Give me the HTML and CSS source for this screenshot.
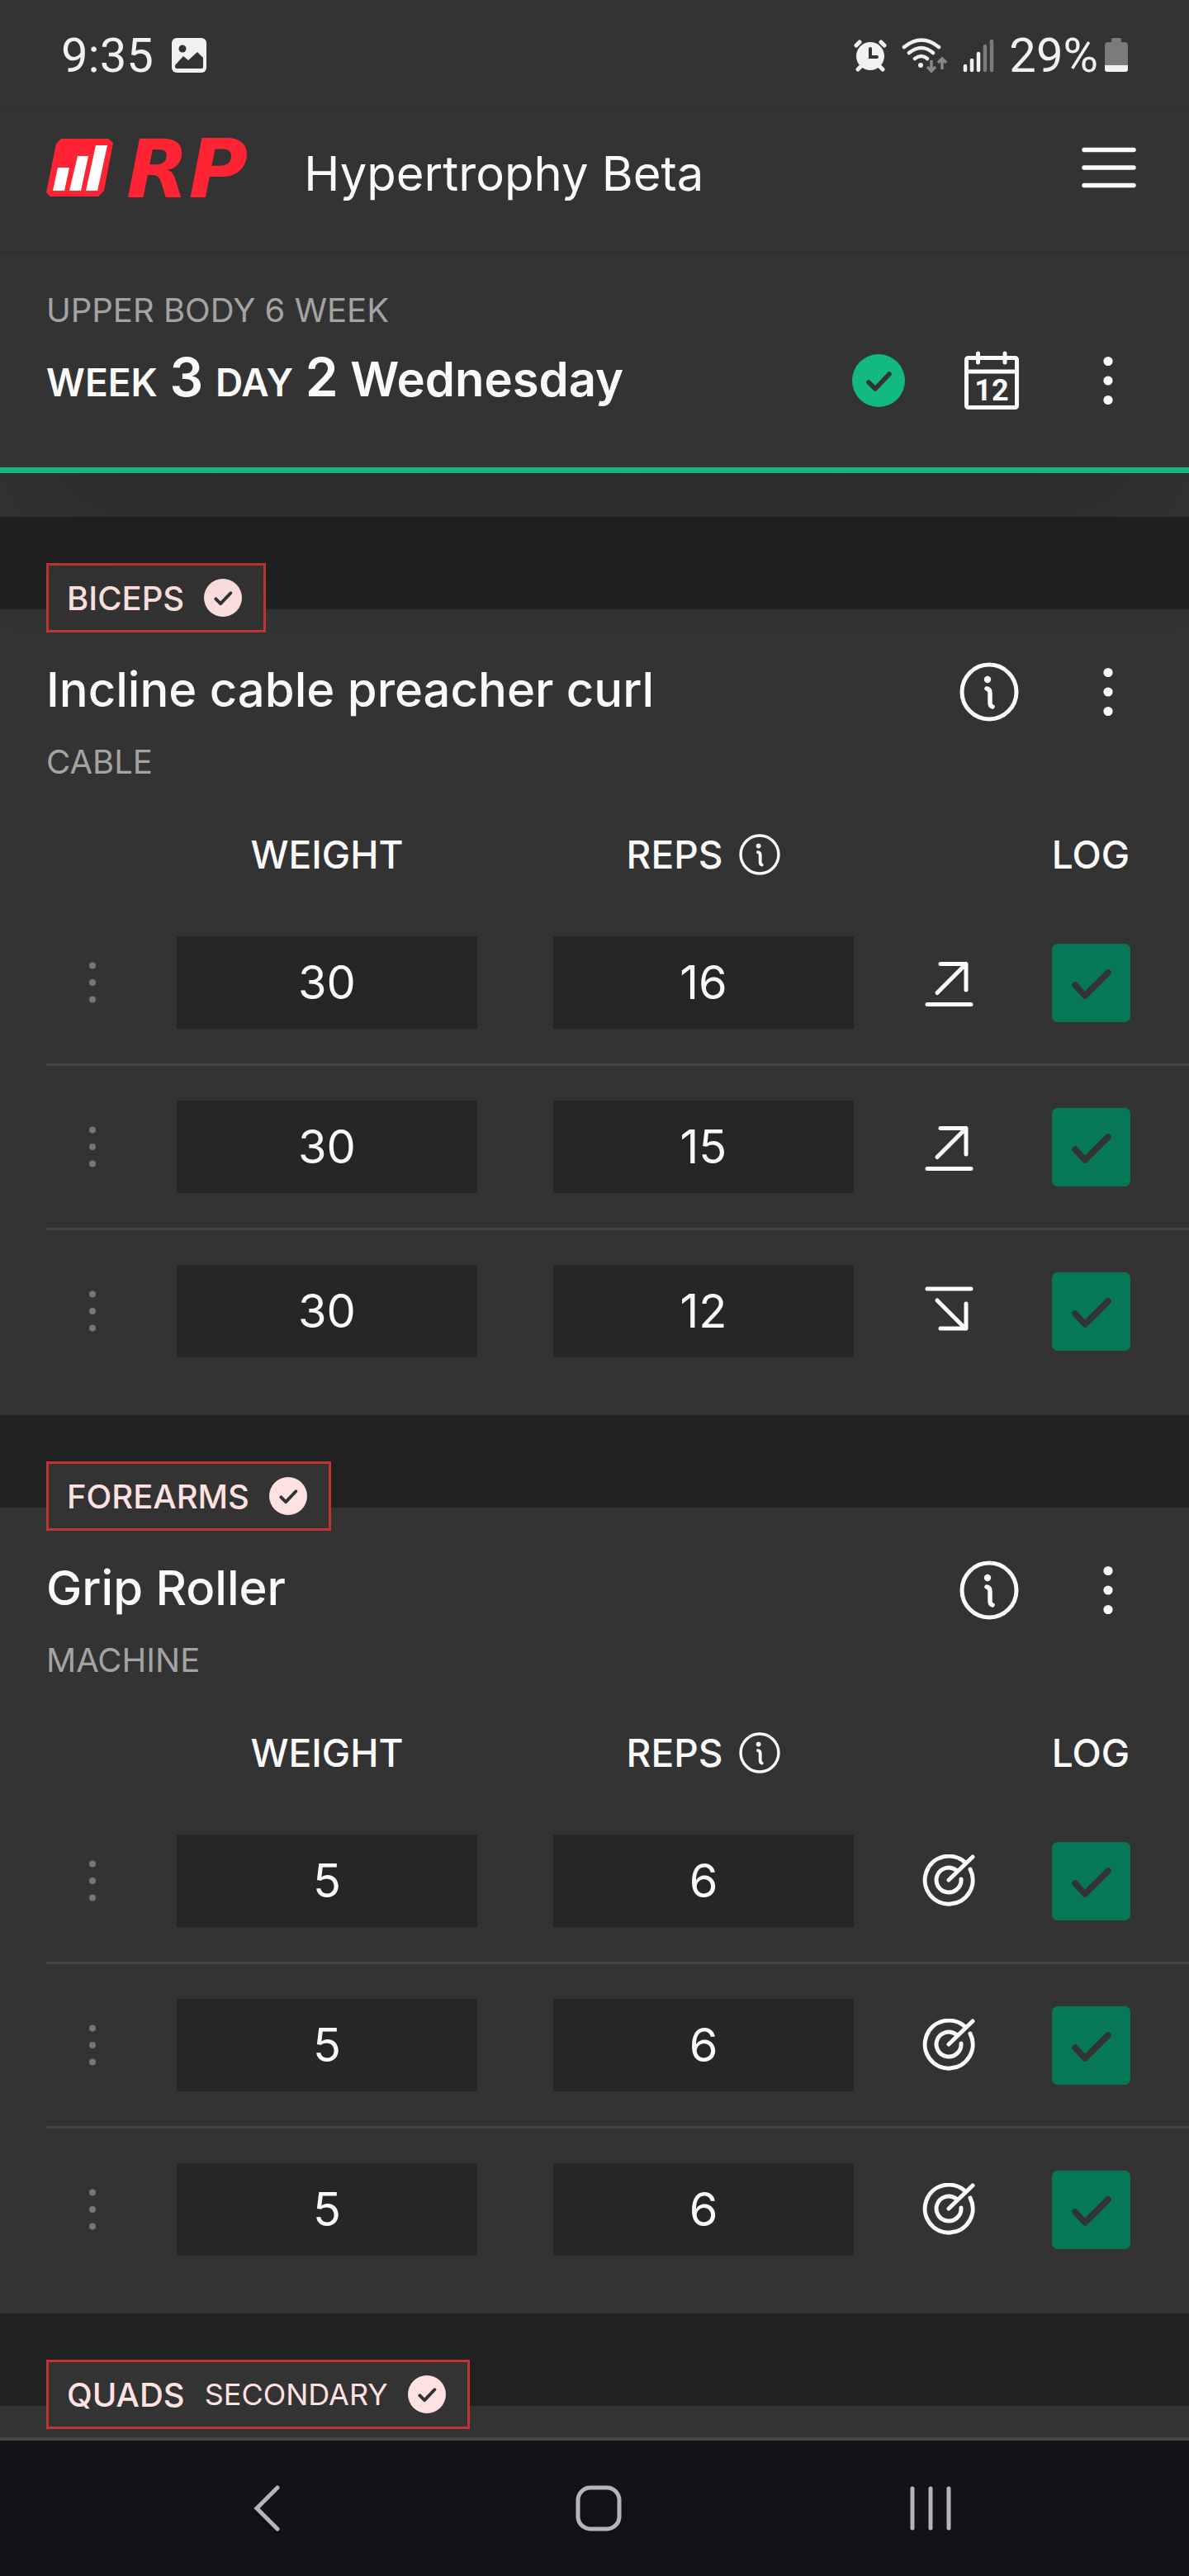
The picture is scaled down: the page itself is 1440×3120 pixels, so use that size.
FILE: index.html
```html
<!DOCTYPE html>
<html lang="en">
<head>
<meta charset="UTF-8">
<meta name="viewport" content="width=device-width, initial-scale=1">
<title>Hypertrophy Beta</title>
<link rel="stylesheet" href="styles.css">
</head>

<body>
  <!-- ============  Shared icons  ============ -->
  <svg class="sprite" aria-hidden="true">
    <symbol id="i-info" viewBox="0 0 72 72">
      <circle cx="36" cy="36" r="33" fill="none" stroke="currentColor" stroke-width="5"/>
      <circle cx="34" cy="21" r="4.2" fill="currentColor"/>
      <path d="M33 32q4 1 4 5v12q0 4 3 5" fill="none" stroke="currentColor" stroke-width="5.5" stroke-linecap="round"/>
    </symbol>
    <symbol id="i-dots" viewBox="0 0 12 72">
      <circle cx="6" cy="12.5" r="5.6" fill="currentColor"/>
      <circle cx="6" cy="36" r="5.6" fill="currentColor"/>
      <circle cx="6" cy="59.5" r="5.6" fill="currentColor"/>
    </symbol>
    <symbol id="i-grip" viewBox="0 0 10 52">
      <circle cx="5" cy="5.5" r="4" fill="currentColor"/>
      <circle cx="5" cy="26" r="4" fill="currentColor"/>
      <circle cx="5" cy="46.5" r="4" fill="currentColor"/>
    </symbol>
    <symbol id="i-done" viewBox="0 0 64 64">
      <circle cx="32" cy="32" r="32" fill="currentColor"/>
      <path d="M20 34l8 8 17-18" fill="none" stroke="#333" stroke-width="5.5" stroke-linecap="round" stroke-linejoin="round"/>
    </symbol>
    <symbol id="i-check" viewBox="0 0 95 95">
      <path d="M28 50l12 13 28-28" fill="none" stroke="currentColor" stroke-width="7.5" stroke-linecap="round" stroke-linejoin="round"/>
    </symbol>
    <symbol id="i-up" viewBox="0 0 64 64">
      <path d="M6 58.5h53M18 44.5L53 9.5M22 9.5h31V41"/>
    </symbol>
    <symbol id="i-down" viewBox="0 0 64 64">
      <path d="M6 5h53M18 19l34 34M22 53h31V23"/>
    </symbol>
    <symbol id="i-target" viewBox="0 0 64 64">
      <path d="M58 18A29 29 0 1 1 52 10M47 30A15 15 0 1 1 41 19M32 31L61 3"/>
    </symbol>
  </svg>

  <header class="top">
    <!-- ============  Status bar  ============ -->
    <div class="status">
      <span>9:35</span>
      <svg class="status-photo" width="42" height="42" viewBox="0 0 42 42" aria-hidden="true">
        <rect width="42" height="42" rx="6" fill="#f1f1f1"/>
        <circle cx="13" cy="13" r="4.5" fill="#333"/>
        <path d="M4 33l10-11 6 5 11-10 7 7v11q0 2-2 2H6q-2 0-2-2z" fill="#333"/>
      </svg>
      <div class="status-right">
        <svg width="40" height="40" viewBox="0 0 40 40" aria-hidden="true">
          <g fill="none" stroke="#f1f1f1" stroke-width="5" stroke-linecap="round">
            <path d="M3 8l4-4M37 8l-4-4M10 32l-5 5M30 32l5 5"/>
          </g>
          <circle cx="20" cy="21" r="17" fill="#f1f1f1"/>
          <path d="M20 12v10h8" fill="none" stroke="#333" stroke-width="4" stroke-linecap="round"/>
        </svg>
        <svg width="56" height="42" viewBox="0 0 56 42" aria-hidden="true">
          <g fill="none" stroke="#f1f1f1" stroke-width="4.5" stroke-linecap="round">
            <path d="M3 11Q24-6 45 11M9 18q15-12 29 0M16 25q8-6 15 0"/>
          </g>
          <circle cx="23" cy="33" r="3" fill="#f1f1f1"/>
          <path d="M36 27v13M31 35l5 5 5-5M49 38V25M44 30l5-5 5 5" fill="none" stroke="#888" stroke-width="3.5"/>
        </svg>
        <svg width="38" height="42" viewBox="0 0 38 42" aria-hidden="true">
          <g stroke="#f1f1f1" stroke-width="4.5" stroke-linecap="round">
            <path d="M3 34v5M11 27v12M19 19v20"/>
            <path d="M27 10v29M35 4v35" stroke="#7b7b7b"/>
          </g>
        </svg>
        <span class="battery">29%
          <svg width="28" height="42" viewBox="0 0 28 42" aria-hidden="true">
            <path d="M8 5V2q0-2 2-2h8q2 0 2 2v3h4q4 0 4 4v24H0V9q0-4 4-4z" fill="#7b7b7b"/>
            <path d="M0 33h28v5q0 3-3 3H3q-3 0-3-3z" fill="#f1f1f1"/>
          </svg>
        </span>
      </div>
    </div>

    <!-- ============  App bar  ============ -->
    <div class="appbar">
      <a href="#" class="logo" aria-label="RP">
        <svg width="81" height="70" viewBox="0 0 81 70" aria-hidden="true">
          <path d="M18 0h57l6 5-11 58-7 7H5l-5-5L12 6z" fill="#ff2434"/>
          <path d="M14 35h14l-6 28H8zM38 21h13l-9 42H28zM60 8h14L62 63H48z" fill="#fff"/>
        </svg>
        <span class="logo-name">RP</span>
      </a>
      <span class="app-name">Hypertrophy Beta</span>
      <button class="icon-btn menu" aria-label="Menu">
        <svg width="66" height="50" viewBox="0 0 66 50">
          <path d="M3 3.5h60M3 25h60M3 46.5h60" stroke="currentColor" stroke-width="5.5" stroke-linecap="round"/>
        </svg>
      </button>
    </div>

    <!-- ============  Workout day  ============ -->
    <div class="day">
      <p class="muted">UPPER BODY 6 WEEK</p>
      <div class="day-row">
        <h1><small>WEEK</small> <b>3</b> <small>DAY</small> <b>2</b> Wednesday</h1>
        <svg class="day-done" width="64" height="64"><use href="#i-done"/></svg>
        <button class="icon-btn" aria-label="Calendar">
          <svg width="66" height="72" viewBox="0 0 66 72">
            <g fill="none" stroke="currentColor" stroke-width="5" stroke-linecap="round">
              <rect x="2.5" y="8.5" width="61" height="60" rx="2"/>
              <path d="M3 25h60M16.5 3v11M49 3v11"/>
            </g>
            <text class="cal-num" x="33" y="60" text-anchor="middle">12</text>
          </svg>
        </button>
        <button class="icon-btn more" aria-label="Workout options">
          <svg width="12" height="72"><use href="#i-dots"/></svg>
        </button>
      </div>
    </div>
  </header>

  <main>
    <div class="card-end"></div>

    <!-- ============  Biceps  ============ -->
    <section class="card">
      <div class="tag">BICEPS <svg width="46" height="46"><use href="#i-done"/></svg></div>
      <div class="card-head">
        <h2>Incline cable preacher curl</h2>
        <button class="icon-btn" aria-label="Exercise info"><svg width="72" height="72"><use href="#i-info"/></svg></button>
        <button class="icon-btn more" aria-label="Exercise options"><svg width="12" height="72"><use href="#i-dots"/></svg></button>
      </div>
      <p class="muted kind">CABLE</p>

      <table class="sets">
        <thead>
          <tr>
            <th class="c-grip"></th>
            <th>WEIGHT</th>
            <th><span class="reps">REPS <svg width="50" height="50"><use href="#i-info"/></svg></span></th>
            <th class="c-goal"></th>
            <th class="c-log">LOG</th>
          </tr>
        </thead>
        <tbody>
          <tr>
            <td><button class="icon-btn grip" aria-label="Set options"><svg width="10" height="52"><use href="#i-grip"/></svg></button></td>
            <td><input class="num" type="text" value="30" aria-label="Weight"></td>
            <td><input class="num" type="text" value="16" aria-label="Reps"></td>
            <td><svg class="goal" width="64" height="64"><use href="#i-up"/></svg></td>
            <td class="c-log"><label class="log"><input type="checkbox" checked aria-label="Log set"><svg><use href="#i-check"/></svg></label></td>
          </tr>
          <tr>
            <td><button class="icon-btn grip" aria-label="Set options"><svg width="10" height="52"><use href="#i-grip"/></svg></button></td>
            <td><input class="num" type="text" value="30" aria-label="Weight"></td>
            <td><input class="num" type="text" value="15" aria-label="Reps"></td>
            <td><svg class="goal" width="64" height="64"><use href="#i-up"/></svg></td>
            <td class="c-log"><label class="log"><input type="checkbox" checked aria-label="Log set"><svg><use href="#i-check"/></svg></label></td>
          </tr>
          <tr>
            <td><button class="icon-btn grip" aria-label="Set options"><svg width="10" height="52"><use href="#i-grip"/></svg></button></td>
            <td><input class="num" type="text" value="30" aria-label="Weight"></td>
            <td><input class="num" type="text" value="12" aria-label="Reps"></td>
            <td><svg class="goal" width="64" height="64"><use href="#i-down"/></svg></td>
            <td class="c-log"><label class="log"><input type="checkbox" checked aria-label="Log set"><svg><use href="#i-check"/></svg></label></td>
          </tr>
        </tbody>
      </table>
    </section>

    <!-- ============  Forearms  ============ -->
    <section class="card">
      <div class="tag">FOREARMS <svg width="46" height="46"><use href="#i-done"/></svg></div>
      <div class="card-head">
        <h2>Grip Roller</h2>
        <button class="icon-btn" aria-label="Exercise info"><svg width="72" height="72"><use href="#i-info"/></svg></button>
        <button class="icon-btn more" aria-label="Exercise options"><svg width="12" height="72"><use href="#i-dots"/></svg></button>
      </div>
      <p class="muted kind">MACHINE</p>

      <table class="sets">
        <thead>
          <tr>
            <th class="c-grip"></th>
            <th>WEIGHT</th>
            <th><span class="reps">REPS <svg width="50" height="50"><use href="#i-info"/></svg></span></th>
            <th class="c-goal"></th>
            <th class="c-log">LOG</th>
          </tr>
        </thead>
        <tbody>
          <tr>
            <td><button class="icon-btn grip" aria-label="Set options"><svg width="10" height="52"><use href="#i-grip"/></svg></button></td>
            <td><input class="num" type="text" value="5" aria-label="Weight"></td>
            <td><input class="num" type="text" value="6" aria-label="Reps"></td>
            <td><svg class="goal" width="64" height="64"><use href="#i-target"/></svg></td>
            <td class="c-log"><label class="log"><input type="checkbox" checked aria-label="Log set"><svg><use href="#i-check"/></svg></label></td>
          </tr>
          <tr>
            <td><button class="icon-btn grip" aria-label="Set options"><svg width="10" height="52"><use href="#i-grip"/></svg></button></td>
            <td><input class="num" type="text" value="5" aria-label="Weight"></td>
            <td><input class="num" type="text" value="6" aria-label="Reps"></td>
            <td><svg class="goal" width="64" height="64"><use href="#i-target"/></svg></td>
            <td class="c-log"><label class="log"><input type="checkbox" checked aria-label="Log set"><svg><use href="#i-check"/></svg></label></td>
          </tr>
          <tr>
            <td><button class="icon-btn grip" aria-label="Set options"><svg width="10" height="52"><use href="#i-grip"/></svg></button></td>
            <td><input class="num" type="text" value="5" aria-label="Weight"></td>
            <td><input class="num" type="text" value="6" aria-label="Reps"></td>
            <td><svg class="goal" width="64" height="64"><use href="#i-target"/></svg></td>
            <td class="c-log"><label class="log"><input type="checkbox" checked aria-label="Log set"><svg><use href="#i-check"/></svg></label></td>
          </tr>
        </tbody>
      </table>
    </section>

    <!-- ============  Quads  ============ -->
    <section class="card card-last">
      <div class="tag">QUADS <small>SECONDARY</small> <svg width="46" height="46"><use href="#i-done"/></svg></div>
    </section>
  </main>

  <!-- ============  System navigation  ============ -->
  <nav class="sysnav">
    <button class="icon-btn" aria-label="Back">
      <svg width="32" height="58" viewBox="0 0 32 58"><path d="M29 4L4 29l25 25" fill="none" stroke="currentColor" stroke-width="5" stroke-linecap="round"/></svg>
    </button>
    <button class="icon-btn" aria-label="Home">
      <svg width="56" height="56" viewBox="0 0 56 56"><rect x="3" y="3" width="50" height="50" rx="15" fill="none" stroke="currentColor" stroke-width="5"/></svg>
    </button>
    <button class="icon-btn" aria-label="Recent apps">
      <svg width="50" height="54" viewBox="0 0 50 54"><path d="M3 3v48M25 3v48M47 3v48" stroke="currentColor" stroke-width="5" stroke-linecap="round"/></svg>
    </button>
  </nav>
</body>
</html>
```
FILE: styles.css
```css
/* base */
*{ box-sizing:border-box }
body{
  margin:0;
  min-height:100vh;
  display:flex;
  flex-direction:column;
  background:#212121;
  color:#fafafa;
  font-family:Inter, "Open Sans", sans-serif;
  font-size:58px;
}
h1, h2, p{ margin:0 }
svg{ display:block; flex:none }
.sprite{ position:absolute; width:0; height:0 }

.icon-btn{
  display:block;
  flex:none;
  padding:0;
  border:none;
  background:none;
  color:inherit;
  cursor:pointer;
}
.more{ margin:0 92px 0 102px }
.muted{
  color:#a3a3a3;
  font-size:40px;
  line-height:50px;
}

/* header */
.top{
  position:relative;
  z-index:2;
  background:#333;
  border-bottom:7px solid #16b57f;
  box-shadow:0 88px 175px -42px rgba(0,0,0,.2);
}
.status{
  display:flex;
  align-items:center;
  height:134px;
  padding:0 74px;
  color:#f1f1f1;
  font-family:Roboto, sans-serif;
}
.status-photo{ margin-left:22px }
.status-right{
  display:flex;
  align-items:center;
  gap:18px;
  margin-left:auto;
}
.battery{
  display:flex;
  align-items:center;
  gap:8px;
}

.appbar{
  display:flex;
  align-items:flex-end;
  padding:34px 64px 66px 56px;
  box-shadow:0 1px 3px rgba(0,0,0,.12);
}
.logo{
  display:flex;
  gap:16px;
  height:70px;
  text-decoration:none;
}
.logo-name{
  color:#ff2434;
  font-family:"DejaVu Sans", sans-serif;
  font-size:98px;
  font-weight:bold;
  font-style:italic;
  line-height:74px;
}
.app-name{
  margin-left:68px;
  line-height:56px;
}
.menu{
  align-self:center;
  margin-left:auto;
}

.day{ padding:47px 0 69px 56px }
.day-row{
  display:flex;
  align-items:center;
  height:72px;
  margin-top:24px;
}
h1{
  font-size:58px;
  font-weight:600;
  line-height:72px;
}
h1 small{ font-size:46px }
h1 b{
  font-size:64px;
  font-weight:600;
  line-height:1;
}
.day-done{
  margin:0 72px 0 auto;
  color:#12b981;
}
.cal-num{
  fill:currentColor;
  font:bold 36px Roboto, sans-serif;
}

/* exercise cards */
.card-end{
  height:53px;
  background:#333;
}
.card{
  margin-top:112px;
  padding:0 0 28px 56px;
  background:#333;
}
.card-last{ padding-bottom:10px }
.tag{
  position:relative;
  top:-56px;
  display:flex;
  align-items:center;
  gap:24px;
  width:max-content;
  height:84px;
  margin-bottom:-56px;
  padding:0 26px 0 22px;
  background:#333;
  border:3px solid #c03434;
  color:#fee2e2;
  font-size:40px;
  font-weight:500;
}
.tag small{
  font-size:36px;
  font-weight:400;
}
.card-head{
  display:flex;
  margin-top:36px;
}
h2{
  margin-right:auto;
  font-size:58px;
  font-weight:500;
  line-height:66px;
}
.kind{ margin-top:24px }

/* sets table */
.sets{
  width:100%;
  table-layout:fixed;
  border-collapse:collapse;
  margin-top:30px;
}
.sets th{
  height:114px;
  padding:0;
  font-size:46px;
  font-weight:500;
}
.sets td{
  padding:42px 0;
  vertical-align:middle;
}
.sets tbody tr + tr{ border-top:3px solid #444 }
.sets .c-grip{ width:112px }
.sets .c-goal{ width:138px }
.sets .c-log{
  width:222px;
  padding-right:16px;
}
.reps{
  display:flex;
  align-items:center;
  justify-content:center;
  gap:20px;
}
.grip{
  margin:0 auto;
  color:#777;
}
.num{
  display:block;
  width:calc(100% - 92px);
  height:112px;
  margin:0 46px;
  padding:0;
  border:none;
  border-radius:0;
  background:#262626;
  color:#fafafa;
  font:inherit;
  font-size:56px;
  text-align:center;
}
.goal{
  margin:0 auto;
  overflow:visible;
  fill:none;
  stroke:currentColor;
  stroke-width:5px;
  stroke-linecap:round;
  stroke-linejoin:round;
}
.log{
  display:grid;
  width:95px;
  height:95px;
  margin:0 auto;
  color:#333;
  cursor:pointer;
}
.log input,
.log svg{
  grid-area:1 / 1;
  width:95px;
  height:95px;
  margin:0;
}
.log input{
  appearance:none;
  border-radius:7px;
  background:#444;
}
.log input:checked{ background:#067857 }
.log svg{
  visibility:hidden;
  pointer-events:none;
}
.log input:checked + svg{ visibility:visible }

/* system navigation */
.sysnav{
  display:grid;
  grid-template-columns:repeat(3, 1fr);
  place-items:center;
  height:168px;
  margin-top:auto;
  padding:0 112px 0 122px;
  background:#111317;
  border-top:4px solid #444649;
  color:#b5b5b8;
}
```
